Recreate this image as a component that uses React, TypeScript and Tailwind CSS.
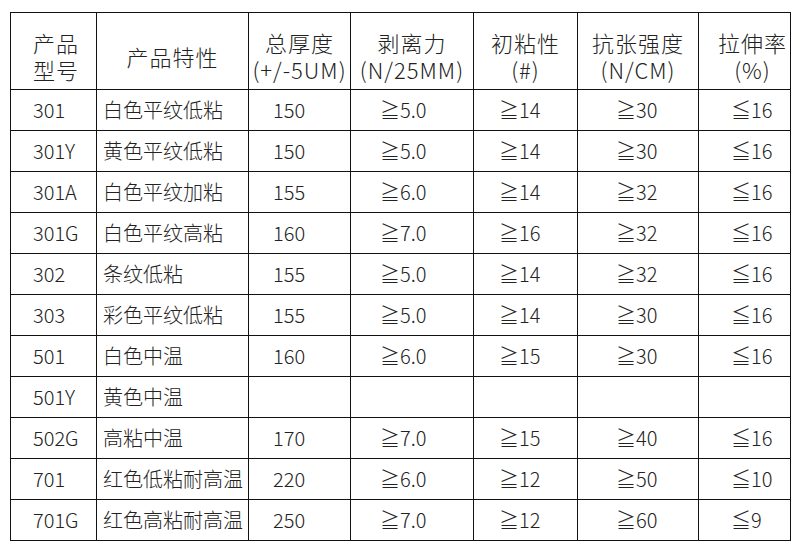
import React from "react";

const rows: string[][] = [
  ["301", "白色平纹低粘", "150", "≧5.0", "≧14", "≧30", "≦16"],
  ["301Y", "黄色平纹低粘", "150", "≧5.0", "≧14", "≧30", "≦16"],
  ["301A", "白色平纹加粘", "155", "≧6.0", "≧14", "≧32", "≦16"],
  ["301G", "白色平纹高粘", "160", "≧7.0", "≧16", "≧32", "≦16"],
  ["302", "条纹低粘", "155", "≧5.0", "≧14", "≧32", "≦16"],
  ["303", "彩色平纹低粘", "155", "≧5.0", "≧14", "≧30", "≦16"],
  ["501", "白色中温", "160", "≧6.0", "≧15", "≧30", "≦16"],
  ["501Y", "黄色中温", "", "", "", "", ""],
  ["502G", "高粘中温", "170", "≧7.0", "≧15", "≧40", "≦16"],
  ["701", "红色低粘耐高温", "220", "≧6.0", "≧12", "≧50", "≦10"],
  ["701G", "红色高粘耐高温", "250", "≧7.0", "≧12", "≧60", "≦9"],
];

const pads = [
  "pl-[22px]",
  "pl-[6px]",
  "pl-[24px]",
  "pl-[29px]",
  "pl-[25px]",
  "pl-[38px]",
  "pl-[32px]",
];

const th = "border-[1.5px] border-[#111] font-light pt-[10px] whitespace-nowrap";

export default function App() {
  return (
    <div
      className="w-[800px] h-[549px] bg-white pt-[12px] pl-[10px] text-[#222]"
      style={{ fontFamily: '"Noto Sans CJK SC", "Noto Sans", sans-serif' }}
    >
      <table className="border-collapse table-fixed w-[781px]">
        <colgroup>
          <col className="w-[86px]" />
          <col className="w-[152px]" />
          <col className="w-[102px]" />
          <col className="w-[123px]" />
          <col className="w-[104px]" />
          <col className="w-[121px]" />
          <col className="w-[92px]" />
        </colgroup>
        <thead>
          <tr className="h-[77px] text-[22px] leading-[27px] tracking-[1px]">
            <th className={`${th} text-left pl-[22px]`}>
              产品
              <br />
              型号
            </th>
            <th className={`${th} text-center`}>产品特性</th>
            <th className={`${th} text-center`}>
              总厚度
              <br />
              (+/-5UM)
            </th>
            <th className={`${th} text-center`}>
              剥离力
              <br />
              (N/25MM)
            </th>
            <th className={`${th} text-center`}>
              初粘性
              <br />
              (#)
            </th>
            <th className={`${th} text-center`}>
              抗张强度
              <br />
              (N/CM)
            </th>
            <th className={`${th} text-center pl-[16px]`}>
              拉伸率
              <br />
              (%)
            </th>
          </tr>
        </thead>
        <tbody>
          {rows.map((r, i) => (
            <tr key={i} className="h-[41px] text-[20px] leading-[26px] font-light">
              {r.map((c, j) => (
                <td
                  key={j}
                  className={`border-[1.5px] border-[#111] text-left whitespace-nowrap p-0 ${pads[j]}`}
                >
                  {c}
                </td>
              ))}
            </tr>
          ))}
        </tbody>
      </table>
    </div>
  );
}
